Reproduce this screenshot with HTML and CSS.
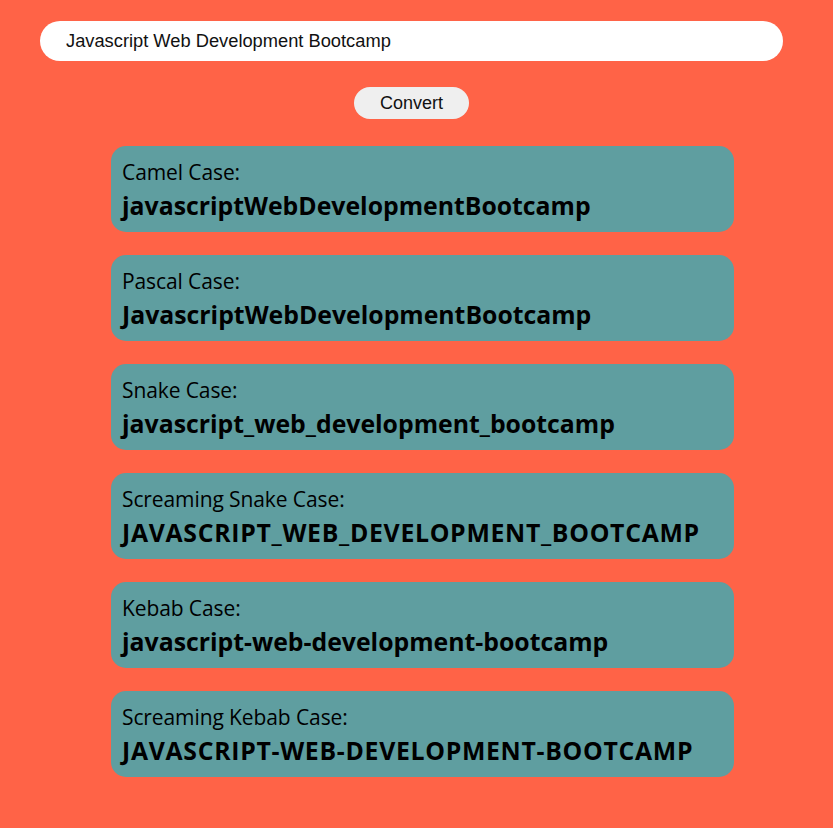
FILE: index.html
```html
<!DOCTYPE html>
<html>
<head>
<meta charset="utf-8">
<link rel="stylesheet" href="styles.css">
</head>
<body>
<div class="app">
  <input class="text-input" type="text" value="Javascript Web Development Bootcamp">
  <div class="actions"><button class="convert">Convert</button></div>
  <div class="results">
    <div class="card"><div class="label">Camel Case:</div><div class="value">javascriptWebDevelopmentBootcamp</div></div>
    <div class="card"><div class="label">Pascal Case:</div><div class="value">JavascriptWebDevelopmentBootcamp</div></div>
    <div class="card"><div class="label">Snake Case:</div><div class="value">javascript_web_development_bootcamp</div></div>
    <div class="card"><div class="label">Screaming Snake Case:</div><div class="value caps">JAVASCRIPT_WEB_DEVELOPMENT_BOOTCAMP</div></div>
    <div class="card"><div class="label">Kebab Case:</div><div class="value">javascript-web-development-bootcamp</div></div>
    <div class="card"><div class="label">Screaming Kebab Case:</div><div class="value caps">JAVASCRIPT-WEB-DEVELOPMENT-BOOTCAMP</div></div>
  </div>
</div>
</body>
</html>
```
FILE: styles.css
```css
html, body {
  margin: 0;
  padding: 0;
  background: #ff6347;
}
.app {
  padding: 21px 50px 20px 40px;
  display: flex;
  flex-direction: column;
}
.text-input {
  box-sizing: border-box;
  width: 743px;
  height: 40px;
  border: none;
  outline: none;
  border-radius: 20px;
  background: #fff;
  padding: 0 0 0 26px;
  font-family: "Liberation Sans", Arial, sans-serif;
  font-size: 18.3px;
  color: #111;
}
.actions {
  display: flex;
  justify-content: center;
  width: 743px;
  margin-top: 26px;
}
.convert {
  width: 115px;
  height: 32px;
  border: none;
  border-radius: 16px;
  background: #efefef;
  font-family: "Liberation Sans", Arial, sans-serif;
  font-size: 18px;
  color: #111;
  padding: 0;
}
.results {
  display: flex;
  flex-direction: column;
  gap: 23px;
  margin-top: 27px;
  margin-left: 71px;
  width: 623px;
}
.card {
  box-sizing: border-box;
  height: 86px;
  background: #5f9ea0;
  border-radius: 15px;
  padding: 13px 11px 0;
  font-family: "Open Sans", "Noto Sans", sans-serif;
  color: #000;
}
.label {
  font-size: 21px;
  line-height: 26px;
  letter-spacing: -0.1px;
}
.value {
  font-size: 24.8px;
  font-weight: 700;
  line-height: 36px;
  margin-top: 2px;
}
.value.caps {
  letter-spacing: 0.7px;
}
```
